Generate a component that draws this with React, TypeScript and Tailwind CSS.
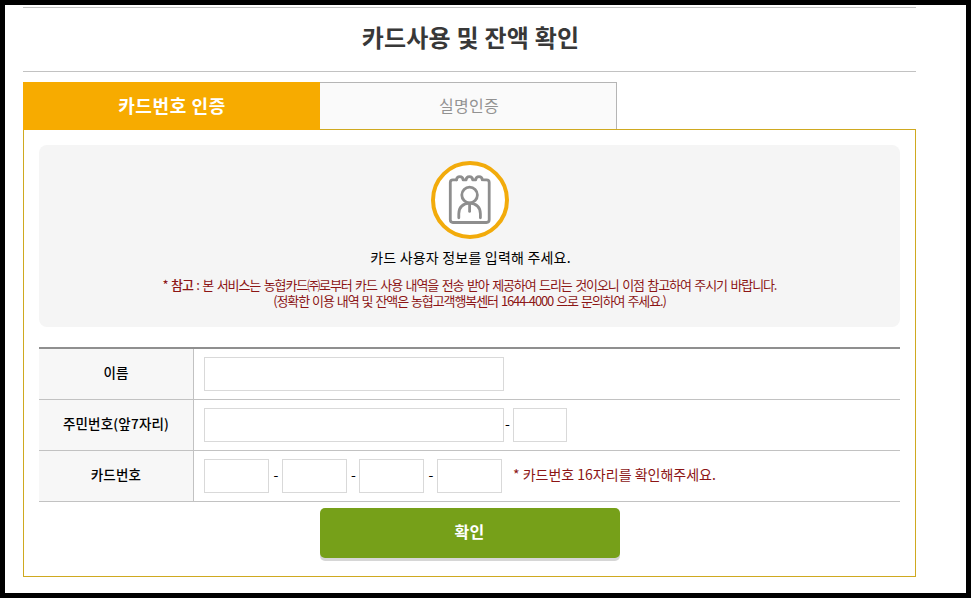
import type { ReactNode } from "react";

function Field({ className }: { className: string }) {
  return (
    <input
      type="text"
      className={`block h-[34px] shrink-0 border border-[#d9d9d9] bg-white px-2 text-sm outline-none ${className}`}
    />
  );
}

function Row({ label, children }: { label: string; children: ReactNode }) {
  return (
    <div className="flex h-[51px] border-b border-[#c2c2c2]">
      <div className="flex w-[155px] shrink-0 items-center justify-center border-r border-[#c2c2c2] bg-[#f7f7f7] text-[13.5px] font-medium tracking-[0.2px] text-black">
        <span className="pb-1">{label}</span>
      </div>
      <div className="flex items-center pl-2.5 text-sm text-black">{children}</div>
    </div>
  );
}

function Dash({ className }: { className: string }) {
  return <span className={`shrink-0 pb-1 text-center ${className}`}>-</span>;
}

function UserBadge() {
  return (
    <svg className="block" width="78" height="78" viewBox="0 0 78 78" fill="none">
      <circle cx="39" cy="39" r="37" fill="#fff" stroke="#f2ab0b" strokeWidth="4" />
      <g stroke="#8e8e8e" strokeWidth="2.8" strokeLinecap="round" strokeLinejoin="round">
        <path d="M25.5 18.8h-3.5q-2.7 0-2.7 2.7v37.3q0 2.7 2.7 2.7h33.5q2.7 0 2.7-2.7v-37.3q0-2.7-2.7-2.7h-3" />
        <path d="M25.5 18.8q.2-3.2 3.3-3.2t3.3 3.2h3q.2-3.2 3.3-3.2t3.3 3.2h3q.2-3.2 3.3-3.2t3.3 3.2" />
        <circle cx="38.6" cy="34" r="7.8" />
        <path d="M27.8 56.8v-4q.2-9.8 10.8-10.6 10.6.8 10.8 10.6v4" />
        <path d="M38.6 43v7.4" />
      </g>
    </svg>
  );
}

export default function App() {
  return (
    <div className="h-[598px] w-[971px] border-[5px] border-black bg-white pt-0.5 pl-[18px] font-['Noto_Sans_CJK_KR',sans-serif]">
      <main className="w-[893px]">
        <h1 className="flex h-[65px] items-center justify-center border-y border-[#c2c2c2] pb-[5px] pl-0.5 text-2xl font-bold tracking-[0.2px] text-[#383838]">
          <span>카드사용 및 잔액 확인</span>
        </h1>
        <div className="mt-2.5 flex h-[47px]">
          <button className="h-12 w-[297px] shrink-0 bg-[#f7ab00] pb-0.5 pl-px text-lg font-bold tracking-[0.6px] text-white">
            카드번호 인증
          </button>
          <button className="h-[47px] w-[297px] border-t border-r border-[#b5b5b5] bg-[#fafafa] pb-0.5 pl-0.5 text-base font-normal tracking-[0.3px] text-[#929292]">
            실명인증
          </button>
        </div>
        <section className="h-[448px] border border-[#cfa920] p-[15px]">
          <div className="flex h-[182px] flex-col items-center rounded-[8px] bg-[#f5f5f5] pt-4">
            <UserBadge />
            <p className="mt-[7px] pl-0.5 text-sm leading-[22px] tracking-[0.2px] text-black">
              카드 사용자 정보를 입력해 주세요.
            </p>
            <p className="mt-[9px] text-[13px] leading-4 tracking-[-1.1px] [word-spacing:1.7px] whitespace-nowrap text-[#8c1515]">
              * <b className="font-medium">참고</b> : 본 서비스는 농협카드㈜로부터 카드 사용 내역을 전송 받아 제공하여 드리는 것이오니 이점 참고하여 주시기 바랍니다.
            </p>
            <p className="text-[13px] leading-4 tracking-[-1.1px] [word-spacing:1.2px] whitespace-nowrap text-[#8c1515]">
              (정확한 이용 내역 및 잔액은 농협고객행복센터 1644-4000 으로 문의하여 주세요.)
            </p>
          </div>
          <div className="mt-5 border-t-2 border-[#8f8f8f]">
            <Row label="이름">
              <Field className="w-[300px]" />
            </Row>
            <Row label="주민번호(앞7자리)">
              <Field className="w-[300px]" />
              <Dash className="w-[9px] pr-0.5" />
              <Field className="w-[54px]" />
            </Row>
            <Row label="카드번호">
              <Field className="w-[65px]" />
              <Dash className="w-[13px] pl-px" />
              <Field className="w-[65px]" />
              <Dash className="w-3 pl-px" />
              <Field className="w-[65px]" />
              <Dash className="w-[13px] pl-px" />
              <Field className="w-[65px]" />
              <span className="ml-[11px] pb-[5px] text-sm text-[#8c1515]">
                * 카드번호 16자리를 확인해주세요.
              </span>
            </Row>
          </div>
          <button className="mx-auto mt-1.5 block h-[50px] w-[300px] rounded-[5px] bg-[#76a019] pb-1 text-base font-bold tracking-[0.3px] text-white shadow-[0_3px_0_#d6d6d6]">
            확인
          </button>
        </section>
      </main>
    </div>
  );
}
